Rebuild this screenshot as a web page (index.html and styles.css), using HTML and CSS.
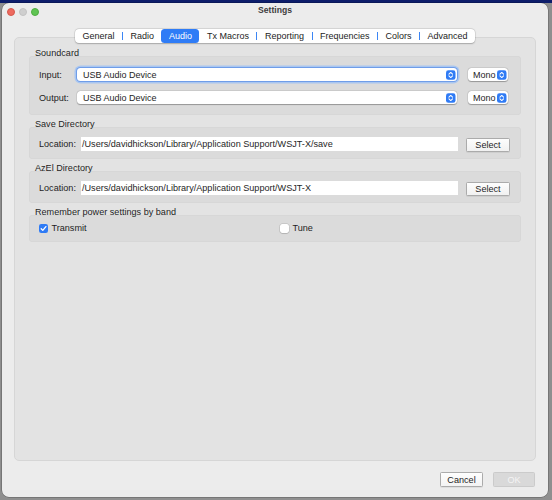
FILE: index.html
```html
<!DOCTYPE html>
<html lang="en">
<head>
<meta charset="utf-8">
<title>Settings</title>
<link rel="stylesheet" href="styles.css">
</head>
<body>
<div class="window">
  <div class="titlebar">
    <div class="lights">
      <span class="light red"></span>
      <span class="light gray"></span>
      <span class="light green"></span>
    </div>
    <div class="title">Settings</div>
    <div></div>
  </div>

  <div class="tabs-wrap">
    <div class="tabbar">
      <span class="tab">General</span>
      <span class="sep"></span>
      <span class="tab">Radio</span>
      <span class="tab active">Audio</span>
      <span class="tab">Tx Macros</span>
      <span class="sep"></span>
      <span class="tab">Reporting</span>
      <span class="sep"></span>
      <span class="tab">Frequencies</span>
      <span class="sep"></span>
      <span class="tab">Colors</span>
      <span class="sep"></span>
      <span class="tab">Advanced</span>
    </div>
  </div>

  <div class="pane">
    <section class="sec">
      <div class="gtitle">Soundcard</div>
      <div class="group sound">
        <div class="row">
          <span class="lbl">Input:</span>
          <div class="combo focus">
            <span>USB Audio Device</span>
            <svg class="stepper" viewBox="0 0 10 10"><rect width="10" height="10" rx="2.5" fill="#2f7bf5"/><path d="M3.1 4.1 L5 2.3 L6.9 4.1" stroke="#fff" stroke-width="1.1" fill="none" stroke-linecap="round" stroke-linejoin="round"/><path d="M3.1 5.9 L5 7.7 L6.9 5.9" stroke="#fff" stroke-width="1.1" fill="none" stroke-linecap="round" stroke-linejoin="round"/></svg>
          </div>
          <div class="combo mono">
            <span>Mono</span>
            <svg class="stepper" viewBox="0 0 10 10"><rect width="10" height="10" rx="2.5" fill="#2f7bf5"/><path d="M3.1 4.1 L5 2.3 L6.9 4.1" stroke="#fff" stroke-width="1.1" fill="none" stroke-linecap="round" stroke-linejoin="round"/><path d="M3.1 5.9 L5 7.7 L6.9 5.9" stroke="#fff" stroke-width="1.1" fill="none" stroke-linecap="round" stroke-linejoin="round"/></svg>
          </div>
        </div>
        <div class="row">
          <span class="lbl">Output:</span>
          <div class="combo">
            <span>USB Audio Device</span>
            <svg class="stepper" viewBox="0 0 10 10"><rect width="10" height="10" rx="2.5" fill="#2f7bf5"/><path d="M3.1 4.1 L5 2.3 L6.9 4.1" stroke="#fff" stroke-width="1.1" fill="none" stroke-linecap="round" stroke-linejoin="round"/><path d="M3.1 5.9 L5 7.7 L6.9 5.9" stroke="#fff" stroke-width="1.1" fill="none" stroke-linecap="round" stroke-linejoin="round"/></svg>
          </div>
          <div class="combo mono">
            <span>Mono</span>
            <svg class="stepper" viewBox="0 0 10 10"><rect width="10" height="10" rx="2.5" fill="#2f7bf5"/><path d="M3.1 4.1 L5 2.3 L6.9 4.1" stroke="#fff" stroke-width="1.1" fill="none" stroke-linecap="round" stroke-linejoin="round"/><path d="M3.1 5.9 L5 7.7 L6.9 5.9" stroke="#fff" stroke-width="1.1" fill="none" stroke-linecap="round" stroke-linejoin="round"/></svg>
          </div>
        </div>
      </div>
    </section>

    <section class="sec">
      <div class="gtitle">Save Directory</div>
      <div class="group dir">
        <span class="lbl">Location:</span>
        <div class="field">/Users/davidhickson/Library/Application Support/WSJT-X/save</div>
        <button class="btn">Select</button>
      </div>
    </section>

    <section class="sec">
      <div class="gtitle">AzEl Directory</div>
      <div class="group dir">
        <span class="lbl">Location:</span>
        <div class="field">/Users/davidhickson/Library/Application Support/WSJT-X</div>
        <button class="btn">Select</button>
      </div>
    </section>

    <section class="sec">
      <div class="gtitle">Remember power settings by band</div>
      <div class="group power">
        <label class="check">
          <svg class="box" viewBox="0 0 9 9"><rect width="9" height="9" rx="2.2" fill="#2f7bf5"/><path d="M2.2 4.7 L3.8 6.4 L6.9 2.6" stroke="#fff" stroke-width="1.3" fill="none" stroke-linecap="round" stroke-linejoin="round"/></svg>
          <span>Transmit</span>
        </label>
        <label class="check">
          <span class="box empty"></span>
          <span>Tune</span>
        </label>
      </div>
    </section>
  </div>

  <div class="footer">
    <button class="pbtn">Cancel</button>
    <button class="pbtn disabled">OK</button>
  </div>
</div>
</body>
</html>
```

FILE: styles.css
```css
html, body {
  margin: 0;
  padding: 0;
}

body {
  width: 552px;
  height: 500px;
  overflow: hidden;
  background: linear-gradient(#0d1d6b 0, #0d1d6b 3px, #8f8f8f 3px);
  font-family: "Liberation Sans", Arial, sans-serif;
  font-size: 9.1px;
  color: #1e1e1e;
}

.window {
  margin: 3px 0 0 2px;
  width: 546px;
  height: 494px;
  background: #ececec;
  border-radius: 7px;
  display: flex;
  flex-direction: column;
  box-shadow: 0 0 0 0.5px rgba(0, 0, 0, 0.35);
  overflow: hidden;
}

/* title bar */
.titlebar {
  height: 25.5px;
  flex: none;
  display: grid;
  grid-template-columns: 1fr auto 1fr;
}

.lights {
  display: flex;
  align-items: flex-start;
  gap: 4px;
  padding: 4.5px 0 0 4.5px;
}

.light {
  width: 8px;
  height: 8px;
  border-radius: 50%;
  box-sizing: border-box;
}

.red { background: #ee6a5f; border: 0.5px solid #d4584d; }
.gray { background: #cfcfcf; border: 0.5px solid #c2c2c2; }
.green { background: #5fc453; border: 0.5px solid #4ead42; }

.title {
  font-weight: bold;
  font-size: 8.6px;
  line-height: 10px;
  padding-top: 1.5px;
  color: #3d3d3d;
}

/* tabs */
.tabs-wrap {
  flex: none;
  display: flex;
  justify-content: center;
  position: relative;
  z-index: 1;
}

.tabbar {
  display: flex;
  align-items: center;
  height: 14px;
  background: #ffffff;
  border-radius: 4px;
  box-shadow: 0 0 0 0.5px rgba(0, 0, 0, 0.12), 0 0.5px 1.5px rgba(0, 0, 0, 0.22);
}

.tab {
  padding: 0 7.5px;
  font-size: 9px;
  line-height: 14px;
  height: 14px;
  color: #1d1d1d;
}

.tab.active {
  background: #2f7cf6;
  color: #ffffff;
  border-radius: 3.5px;
}

.sep {
  width: 1px;
  height: 8px;
  background: #3c86f5;
}

/* pane */
.pane {
  flex: 1;
  margin: -6px 12px 0;
  background: #e3e3e3;
  border: 0.5px solid #d6d6d6;
  border-radius: 5px;
  padding: 10px 14px 0;
}

.sec + .sec {
  margin-top: 4px;
}

.gtitle {
  font-size: 9.1px;
  line-height: 11px;
  height: 11px;
  padding-left: 6px;
  margin-bottom: -3px;
  white-space: nowrap;
}

.group {
  background: #dbdbdb;
  border-radius: 4px;
  box-shadow: inset 0 0 0 0.5px #d3d3d3;
}

/* soundcard */
.sound {
  padding: 12px 13px 10px 10px;
  display: flex;
  flex-direction: column;
  gap: 9px;
}

.row {
  display: flex;
  align-items: center;
  height: 14px;
}

.sound .lbl {
  width: 38px;
  flex: none;
}

.combo {
  flex: 1;
  height: 13px;
  box-sizing: border-box;
  display: flex;
  align-items: center;
  justify-content: space-between;
  background: #ffffff;
  border-radius: 3.5px;
  padding: 0 1.5px 0 6px;
  font-size: 9px;
  box-shadow: 0 0 0 0.5px rgba(0, 0, 0, 0.1), 0 0.5px 1px rgba(0, 0, 0, 0.28);
}

.combo.focus {
  box-shadow: 0 0 0 1px #6f9de8, 0 0 0 2.5px #a9c6f0;
}

.combo.mono {
  flex: none;
  width: 40px;
  margin-left: 11px;
  padding-left: 5px;
}

.stepper {
  width: 9.5px;
  height: 10px;
  display: block;
  flex: none;
}

/* directories */
.dir {
  display: flex;
  align-items: flex-start;
  padding: 10px 11px 8px 10px;
}

.dir .lbl {
  width: 42px;
  flex: none;
  line-height: 14px;
}

.field {
  flex: 1;
  height: 14px;
  line-height: 14px;
  background: #ffffff;
  padding-left: 1px;
  white-space: nowrap;
  overflow: hidden;
}

.btn {
  margin: 1.5px 0 -1.5px 8px;
  width: 44px;
  height: 14px;
  flex: none;
  padding: 0;
  font-family: inherit;
  font-size: 9.1px;
  color: #1e1e1e;
  background: linear-gradient(#fdfdfd, #f1f1f1);
  border: 0.5px solid #ababab;
  border-radius: 1.5px;
  box-shadow: 0 0.5px 0.5px rgba(0, 0, 0, 0.12);
}

/* power */
.power {
  display: grid;
  grid-template-columns: 241px 1fr;
  padding: 8px 10px 8px;
}

.check {
  display: flex;
  align-items: center;
  gap: 3.5px;
  height: 11px;
}

.box {
  width: 9px;
  height: 9px;
  display: block;
  flex: none;
}

.box.empty {
  box-sizing: border-box;
  background: #ffffff;
  border-radius: 2.2px;
  box-shadow: 0 0 0 0.5px rgba(0, 0, 0, 0.15), 0 0.5px 1px rgba(0, 0, 0, 0.2);
}

/* footer */
.footer {
  flex: none;
  display: flex;
  justify-content: flex-end;
  gap: 10px;
  padding: 11px 13px 10px;
}

.pbtn {
  width: 43px;
  height: 15px;
  padding: 0;
  font-family: inherit;
  font-size: 9.1px;
  color: #1e1e1e;
  background: linear-gradient(#fefefe, #f3f3f3);
  border: 0.5px solid #ababab;
  border-radius: 1.5px;
  box-shadow: 0 0.5px 0.5px rgba(0, 0, 0, 0.12);
}

.pbtn.disabled {
  width: 42px;
  color: #f4f4f4;
  background: #d9d9d9;
  border-color: #cbcbcb;
  box-shadow: none;
}
```
